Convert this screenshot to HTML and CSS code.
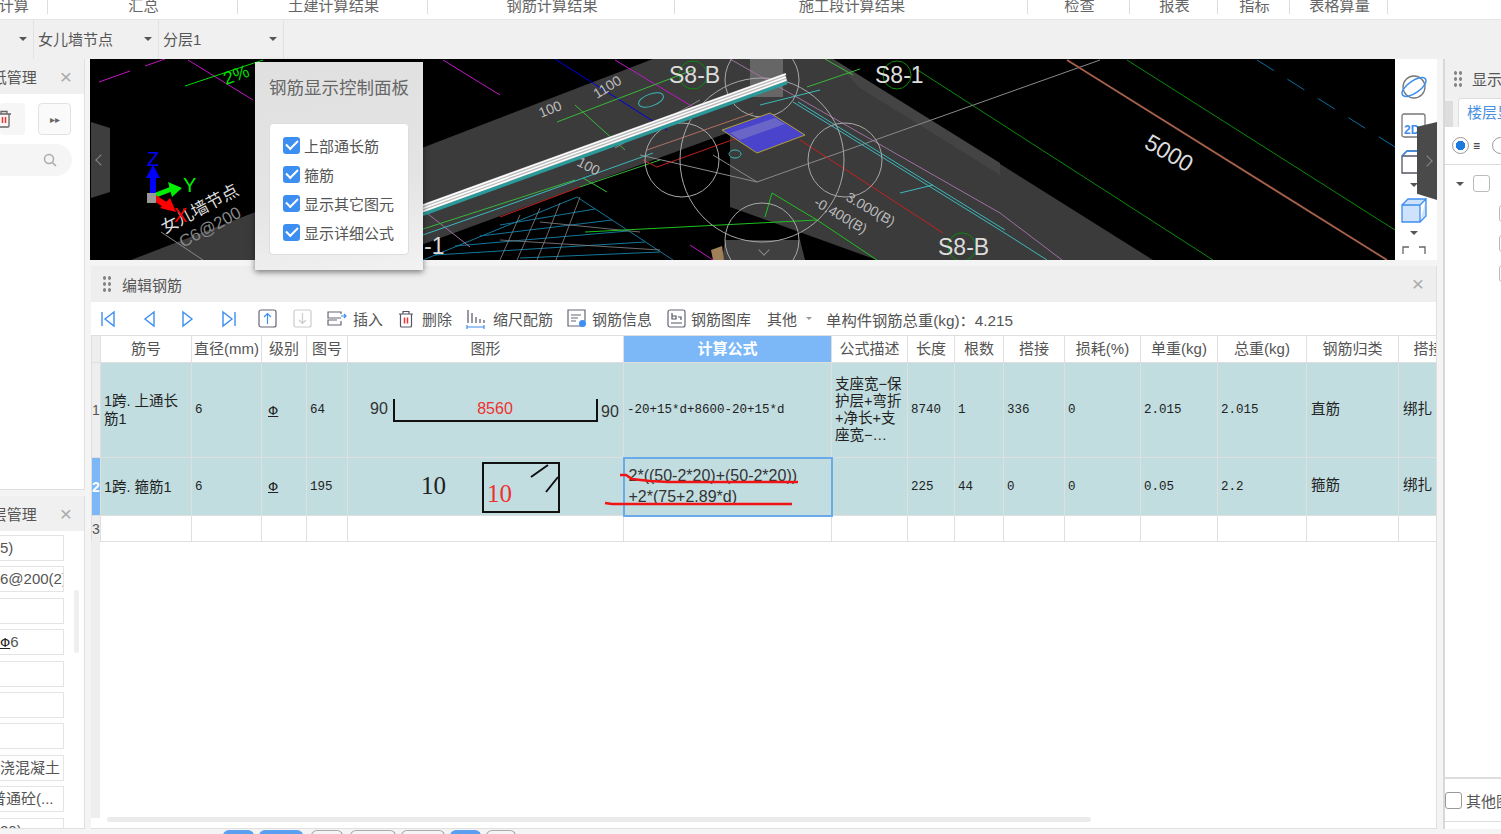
FILE: index.html
```html
<!DOCTYPE html>
<html lang="zh-CN">
<head>
<meta charset="utf-8">
<title>编辑钢筋</title>
<link rel="stylesheet" href="styles.css">
</head>
<body>
<div class="tabs">
	<div class="tab t1">计算</div>
	<div class="tab t2">汇总</div>
	<div class="tab t3">土建计算结果</div>
	<div class="tab t4">钢筋计算结果</div>
	<div class="tab t5">施工段计算结果</div>
	<div class="tab t6">检查</div>
	<div class="tab t7">报表</div>
	<div class="tab t8">指标</div>
	<div class="tab t9">表格算量</div>
</div>
<div class="bar">
	<div class="drop d1"><i class="caret"></i></div>
	<div class="drop d2"><span>女儿墙节点</span><i class="caret"></i></div>
	<div class="drop d3"><span>分层1</span><i class="caret"></i></div>
</div>

<div class="main">
	<div class="left">
		<div class="side upper">
			<div class="side-head"><span>纸管理</span><b class="close">×</b></div>
			<div class="side-btns">
				<div class="sq del">
					<svg width="16" height="18" viewBox="0 0 16 18"><path d="M1 4h13M4 4V1.500h6V4M2 4v12a1 1 0 0 0 1 1h8a1 1 0 0 0 1-1V4" fill="none" stroke="#666" stroke-width="1.300"/><path d="M5.500 7v6M8.500 7v6" stroke="#e33" stroke-width="1.500"/></svg>
				</div>
				<div class="sq more">▸▸</div>
			</div>
			<div class="search">
				<svg width="14" height="14" viewBox="0 0 14 14"><circle cx="6" cy="6" r="4.500" fill="none" stroke="#aaa" stroke-width="1.500"/><path d="M9.500 9.500L13 13" stroke="#aaa" stroke-width="1.500"/></svg>
			</div>
		</div>
		<div class="side lower">
			<div class="side-head"><span>层管理</span><b class="close">×</b></div>
			<div class="inputs">
				<div class="inp">5)</div>
				<div class="inp">6@200(2)</div>
				<div class="inp"></div>
				<div class="inp"><span class="lv-mark">Φ</span>6</div>
				<div class="inp"></div>
				<div class="inp"></div>
				<div class="inp"></div>
				<div class="inp">浇混凝土</div>
				<div class="inp cut">普通砼(...</div>
				<div class="inp">20)</div>
			</div>
			<div class="side-scroll"></div>
		</div>
	</div>

	<div class="center">
		<div class="view">
			<div class="canvas">
				<svg class="cad" width="1305" height="201" viewBox="90 59 1305 201">
					<rect x="90" y="59" width="1305" height="201" fill="#000"/>
					<!-- 构件 -->
					<polygon points="131,260 653,59 833,59 1153,260 877,260 730,207 730,132 380,260" fill="#3b3b3b"/>
					<polygon points="725,240 800,240 805,260 722,260" fill="#404040"/>
					<polygon points="750,59 783,59 783,97 750,97" fill="#666"/>
					<polygon points="833,59 1000,163 1000,175 860,88" fill="#444"/>
					<polygon points="711,250 722,246 724,260 713,260" fill="#a08058"/>
					<!-- 网格 -->
					<g stroke="#13779b" stroke-width="1" fill="none">
						<path d="M423,260L577,197L673,260"/>
						<path d="M500,225L595,209M480,236L612,220M455,246L628,231M435,255L645,242M520,258L660,252"/>
					</g>
					<g stroke="#888" stroke-width=".8" fill="none">
						<path d="M520,215L500,260M540,208L517,260M560,203L537,260M580,197L556,260M540,222L640,232M500,240L660,250"/>
					</g>
					<!-- 轴线 -->
					<g fill="none" stroke-width="1">
						<path d="M99,82L130,71M145,66L165,59M188,60L253,100M443,60L500,95M615,60L703,113M690,245L713,260" stroke="#c414c4"/>
						<path d="M730,59L1000,213M423,210L470,247M1000,213L1062,260" stroke="#a070a0"/>
						<path d="M185,86L263,60" stroke="#0d0"/>
						<path d="M555,59L667,130" stroke="#0000e0"/>
						<path d="M557,122L693,70M575,105L625,150M825,59L853,75M807,87L860,69M580,187L660,160M583,178L607,192M420,230L575,180" stroke="#38b838"/>
						<path d="M585,232L817,220M765,217L772,193L817,220M817,220L877,260" stroke="#1fc01f"/>
						<path d="M913,67L1000,123M1127,60L1395,230M1000,123L1213,260" stroke="#0a8a0a"/>
						<path d="M1257,60L1395,147" stroke="#0a6f9f" stroke-dasharray="20 16"/>
						<path d="M757,182L1100,60M713,155L757,182L640,155M615,148L700,100" stroke="#8a8a8a"/>
						<path d="M1067,60L1387,260" stroke="#a8604c" stroke-width="1.800"/>
						<path d="M793,102L1000,230L1047,260M500,208L653,153M420,236L500,208M760,105L820,90M900,193L933,185" stroke="#3bb8bc"/>
						<path d="M798,102L1005,230" stroke="#3bb8bc"/>
						<path d="M500,217L580,187M657,167L740,137M800,140L943,233M643,160L657,167" stroke="#c42020"/>
						<path d="M647,150L753,113" stroke="#b07060"/>
					</g>
					<g fill="none" stroke="#a8a8a8" stroke-width="1">
						<circle cx="682" cy="160" r="37"/>
						<circle cx="845" cy="160" r="37"/>
						<circle cx="762" cy="240" r="37"/>
						<circle cx="762" cy="80" r="37"/>
						<circle cx="762" cy="160" r="82"/>
					</g>
					<ellipse cx="651" cy="100" rx="13" ry="6" fill="none" stroke="#3bb8bc" transform="rotate(-20 651 100)"/>
					<ellipse cx="735" cy="154" rx="6" ry="4" fill="none" stroke="#3bb8bc"/>
					<polygon points="722,130 770,113 805,135 757,153" fill="#4a44cc" stroke="#b0a030"/>
					<polygon points="730,133 775,118 785,124 740,140" fill="#6a66c8"/>
					<!-- 钢筋 -->
					<g fill="none">
						<path d="M410,216L786,80" stroke="#2a9a9a" stroke-width="9"/>
						<path d="M410,213L786,77" stroke="#bbb" stroke-width="8"/>
						<path d="M410,210L786,74M410,213L786,77M410,216L786,80" stroke="#fff" stroke-width="1.500"/>
					</g>
					<!-- 文字 -->
					<g fill="none" stroke="#0a8a0a">
						<circle cx="693" cy="75" r="14"/>
						<circle cx="897" cy="75" r="14"/>
						<circle cx="962" cy="247" r="14"/>
					</g>
					<g class="cad-t">
						<text x="669" y="83">S8-B</text>
						<text x="875" y="83">S8-1</text>
						<text x="938" y="255">S8-B</text>
						<text x="424" y="254">-1</text>
						<text x="0" y="0" transform="translate(1143,147) rotate(30)">5000</text>
					</g>
					<g class="cad-s">
						<text transform="translate(541,118) rotate(-22)">100</text>
						<text transform="translate(597,99) rotate(-32)">1100</text>
						<text transform="translate(576,165) rotate(28)">100</text>
						<text transform="translate(845,200) rotate(30)">3.000(B)</text>
						<text transform="translate(813,205) rotate(30)">-0.400(B)</text>
					</g>
					<text class="cad-g" transform="translate(226,85) rotate(-20)">2%</text>
					<g class="cad-n">
						<text transform="translate(165,234) rotate(-28)">女儿墙节点</text>
						<text class="dim" transform="translate(183,248) rotate(-28)">C6@200</text>
					</g>
					<path d="M161,232L203,260" fill="none" stroke="#888"/>
					<!-- 坐标 -->
					<path d="M153,195V170" stroke="#00f" stroke-width="6"/>
					<polygon points="153,165 146,178 160,178" fill="#00f"/>
					<path d="M156,195L174,188" stroke="#0e0" stroke-width="5"/>
					<polygon points="182,188 168,182 172,197" fill="#0e0"/>
					<path d="M155,198L170,208" stroke="#f00" stroke-width="6"/>
					<polygon points="176,212 160,208 170,198" fill="#f00"/>
					<rect x="147" y="193" width="9" height="10" fill="#999"/>
					<text class="ax blue" x="147" y="166">Z</text>
					<text class="ax lime" x="183" y="192">Y</text>
					<text class="ax red" x="174" y="222">X</text>
				</svg>
				<div class="handle h-left"><i class="chev lft"></i></div>
				<i class="chev dwn"></i>
			</div>
			<div class="strip">
				<svg width="30" height="30" viewBox="0 0 30 30"><ellipse cx="15" cy="14" rx="11" ry="11" fill="none" stroke="#777" stroke-width="1.300"/><ellipse cx="15" cy="14" rx="14" ry="6" fill="none" stroke="#3c8ef0" stroke-width="1.500" transform="rotate(-35 15 14)"/></svg>
				<svg width="26" height="26" viewBox="0 0 26 26"><rect x="1" y="1" width="23" height="23" rx="2" fill="#fff" stroke="#777" stroke-width="1.300"/><text class="twod" x="3" y="21">2D</text></svg>
				<svg width="26" height="26" viewBox="0 0 26 26"><path d="M1 7h17v17H1zM1 7l5-5h17l-5 5" fill="#fff" stroke="#556" stroke-width="1.300"/><path d="M1 7l5-5h17" fill="none" stroke="#3c8ef0" stroke-width="1.300"/></svg>
				<i class="caret"></i>
				<svg width="26" height="26" viewBox="0 0 26 26"><path d="M1 8h18v17H1zM1 8l6-6h18l-6 6M25 2v17l-6 6" fill="#cfe2fb" stroke="#3c8ef0" stroke-width="1.300"/></svg>
				<i class="caret"></i>
				<svg width="26" height="10" viewBox="0 0 26 10"><path d="M2 9V2h6M18 2h6v7" fill="none" stroke="#666" stroke-width="1.300"/></svg>
			</div>
			<div class="handle h-right"><i class="chev rgt"></i></div>

			<div class="panel">
				<div class="panel-t">钢筋显示控制面板</div>
				<div class="checks">
					<label class="chk"><i class="box"></i>上部通长筋</label>
					<label class="chk"><i class="box"></i>箍筋</label>
					<label class="chk"><i class="box"></i>显示其它图元</label>
					<label class="chk"><i class="box"></i>显示详细公式</label>
				</div>
			</div>
		</div>

		<div class="edit">
			<div class="edit-head">
				<i class="grip"></i>
				<span>编辑钢筋</span>
				<b class="close">×</b>
			</div>
			<div class="tools">
				<svg class="nav" width="16" height="18" viewBox="0 0 16 18"><path d="M2 2v14M14 2L5 9l9 7z" fill="none" stroke="#3c8ef0" stroke-width="1.400"/></svg>
				<svg class="nav" width="12" height="18" viewBox="0 0 12 18"><path d="M11 2L2 9l9 7z" fill="none" stroke="#3c8ef0" stroke-width="1.400"/></svg>
				<svg class="nav" width="12" height="18" viewBox="0 0 12 18"><path d="M1 2l9 7-9 7z" fill="none" stroke="#3c8ef0" stroke-width="1.400"/></svg>
				<svg class="nav" width="16" height="18" viewBox="0 0 16 18"><path d="M14 2v14M2 2l9 7-9 7z" fill="none" stroke="#3c8ef0" stroke-width="1.400"/></svg>
				<svg class="ud" width="19" height="19" viewBox="0 0 19 19"><rect x="1" y="1" width="17" height="17" rx="2" fill="none" stroke="#667" stroke-width="1.200"/><path d="M9.500 15V5M6 8l3.500-3.500L13 8" fill="none" stroke="#3c8ef0" stroke-width="1.200"/></svg>
				<svg class="ud" width="19" height="19" viewBox="0 0 19 19"><rect x="1" y="1" width="17" height="17" rx="2" fill="none" stroke="#ccc" stroke-width="1.200"/><path d="M9.500 4v10M6 11l3.500 3.500L13 11" fill="none" stroke="#ccc" stroke-width="1.200"/></svg>
				<div class="tool ins">
					<svg width="20" height="16" viewBox="0 0 20 16"><path d="M14 3V1H1v6h13M14 10v4H1v-5h9" fill="none" stroke="#667" stroke-width="1.200"/><path d="M14 5h5M17 3l2 2-2 2" fill="none" stroke="#3c8ef0" stroke-width="1.200"/></svg>
					<span>插入</span>
				</div>
				<div class="tool rem">
					<svg width="16" height="18" viewBox="0 0 16 18"><path d="M1 4h14M5 4V1.500h6V4M2.500 4v12a1 1 0 0 0 1 1h9a1 1 0 0 0 1-1V4" fill="none" stroke="#556" stroke-width="1.200"/><path d="M6.500 7.500v6M9.500 7.500v6" stroke="#e33" stroke-width="1.500"/></svg>
					<span>删除</span>
				</div>
				<div class="tool scale">
					<svg width="19" height="20" viewBox="0 0 19 20"><path d="M2 1v13M6 4v10M10 8v6M14 10v4M18 11v3" stroke="#556" stroke-width="1.200" fill="none"/><path d="M1 18h17M1 16v4M18 16v4" stroke="#3c8ef0" stroke-width="1.200" fill="none"/></svg>
					<span>缩尺配筋</span>
				</div>
				<div class="tool info">
					<svg width="20" height="19" viewBox="0 0 20 19"><path d="M15 17H1V1h17v11" fill="none" stroke="#667" stroke-width="1.200"/><path d="M4 6h10M4 9h7M4 12h5" stroke="#667" stroke-width="1.200"/><circle cx="15.500" cy="14.500" r="3.500" fill="#3c8ef0"/></svg>
					<span>钢筋信息</span>
				</div>
				<div class="tool lib">
					<svg width="19" height="19" viewBox="0 0 19 19"><rect x="1" y="1" width="17" height="17" rx="2" fill="none" stroke="#667" stroke-width="1.200"/><path d="M5 4v6h4V7H5M11 8h3v3M4 14h11" fill="none" stroke="#556" stroke-width="1.200"/></svg>
					<span>钢筋图库</span>
				</div>
				<div class="tool oth"><span>其他</span><i class="caret small"></i></div>
				<div class="weight">单构件钢筋总重(kg)：4.215</div>
			</div>
			<div class="grid-wrap">
				<table class="grid">
					<colgroup>
						<col class="c0"><col class="c1"><col class="c2"><col class="c3"><col class="c4"><col class="c5"><col class="c6"><col class="c7">
						<col class="c8"><col class="c9"><col class="c10"><col class="c11"><col class="c12"><col class="c13"><col class="c14"><col class="c15">
					</colgroup>
					<thead>
						<tr>
							<th></th><th>筋号</th><th class="tight">直径(mm)</th><th>级别</th><th>图号</th><th>图形</th><th class="on">计算公式</th><th>公式描述</th>
							<th>长度</th><th>根数</th><th>搭接</th><th>损耗(%)</th><th>单重(kg)</th><th>总重(kg)</th><th>钢筋归类</th><th>搭接</th>
						</tr>
					</thead>
					<tbody>
						<tr class="r1">
							<td class="num">1</td>
							<td class="name">1跨. 上通长<br>筋1</td>
							<td class="m">6</td>
							<td class="lv"><span class="lv-mark">Φ</span></td>
							<td class="m">64</td>
							<td class="shape">
								<svg width="276" height="94" viewBox="0 0 276 94">
									<text class="dim-t" x="22" y="51">90</text>
									<path d="M46 36v22h203V36" fill="none" stroke="#111" stroke-width="2"/>
									<text class="dim-r" x="147" y="51" text-anchor="middle">8560</text>
									<text class="dim-t" x="253" y="54">90</text>
								</svg>
							</td>
							<td class="m fx">-20+15*d+8600-20+15*d</td>
							<td class="desc">支座宽−保<br>护层+弯折<br>+净长+支<br>座宽−…</td>
							<td class="m">8740</td>
							<td class="m">1</td>
							<td class="m">336</td>
							<td class="m">0</td>
							<td class="m">2.015</td>
							<td class="m">2.015</td>
							<td class="cn">直筋</td>
							<td class="cn">绑扎</td>
						</tr>
						<tr class="r2">
							<td class="num cur">2</td>
							<td class="name">1跨. 箍筋1</td>
							<td class="m">6</td>
							<td class="lv"><span class="lv-mark">Φ</span></td>
							<td class="m">195</td>
							<td class="shape">
								<svg width="276" height="57" viewBox="0 0 276 57">
									<text class="s10" x="73" y="36">10</text>
									<rect x="135" y="5" width="76" height="49" fill="none" stroke="#111" stroke-width="2"/>
									<text class="s10 red" x="139" y="44">10</text>
									<path d="M183 19l17-12M198 34l12-15" stroke="#111" stroke-width="2" fill="none"/>
								</svg>
							</td>
							<td class="sel">
								<div class="sel-fx">2*((50-2*20)+(50-2*20))<br>+2*(75+2.89*d)</div>
								<svg class="marks" width="200" height="44" viewBox="0 0 200 44">
									<path d="M16 7h6l6 4 18 2 18 1H194" fill="none" stroke="#f01414" stroke-width="2.600"/>
									<path d="M1 35l7 1H188" fill="none" stroke="#f01414" stroke-width="2.600"/>
								</svg>
							</td>
							<td></td>
							<td class="m">225</td>
							<td class="m">44</td>
							<td class="m">0</td>
							<td class="m">0</td>
							<td class="m">0.05</td>
							<td class="m">2.2</td>
							<td class="cn">箍筋</td>
							<td class="cn">绑扎</td>
						</tr>
						<tr class="r3">
							<td class="num">3</td>
							<td></td><td></td><td></td><td></td><td></td><td></td><td></td><td></td><td></td><td></td><td></td><td></td><td></td><td></td><td></td>
						</tr>
					</tbody>
				</table>
				<div class="gutter"></div>
			</div>
			<div class="hscroll"></div>
		</div>
	</div>

	<div class="right">
		<div class="side-head rh"><i class="grip"></i><span>显示</span></div>
		<div class="r-tabs"><div class="r-mini"></div><div class="r-tab">楼层显示</div></div>
		<div class="r-radio"><i class="radio on"></i><span class="ico3">≡</span><i class="radio"></i></div>
		<div class="r-tree">
			<div class="r-node"><i class="caret"></i><i class="cb"></i></div>
			<i class="cb sub"></i>
			<i class="cb sub"></i>
			<i class="cb sub"></i>
		</div>
		<div class="r-foot"><i class="cb big"></i><span>其他图元</span></div>
	</div>
</div>

<div class="foot">
	<i class="pill blue w31"></i>
	<i class="pill blue w44"></i>
	<i class="pill w32"></i>
	<i class="pill w46"></i>
	<i class="pill w44"></i>
	<i class="pill blue w31"></i>
	<i class="pill w30"></i>
</div>
</body>
</html>
```

FILE: styles.css
```css
*{margin:0;padding:0;box-sizing:border-box;}
html,body{width:1501px;height:834px;overflow:hidden;}
body{background:#f4f4f4;font-family:"Liberation Sans","Noto Sans CJK SC",sans-serif;font-size:15px;color:#555;}
i{font-style:normal;display:block;}

/* top tabs, cut off by the window */
.tabs{display:flex;height:20px;background:#fff;border-bottom:1px solid #e4e4e4;overflow:hidden;}
.tab{height:14px;line-height:12px;padding-left:2px;font-size:15.200px;text-align:center;border-right:1px solid #ddd;color:#666;white-space:nowrap;}
.t1{width:48px;text-align:right;padding-right:18px;direction:rtl;}
.t2{width:190px;}
.t3{width:190px;}
.t4{width:247px;}
.t5{width:353px;}
.t6{width:102px;}
.t7{width:88px;}
.t8{width:72px;}
.t9{width:98px;}

.bar{display:flex;height:39px;background:#f0f0f0;}
.drop{display:flex;align-items:center;justify-content:space-between;height:39px;padding:0 6px 2px 4px;border-right:1px solid #e2e2e2;color:#555;}
.d1{width:34px;justify-content:flex-end;padding-right:6px;}
.d2{width:125px;}
.d3{width:125px;}
.caret{width:0;height:0;border-left:4px solid transparent;border-right:4px solid transparent;border-top:4px solid #555;}
.caret.small{border-top-color:#999;border-left-width:3px;border-right-width:3px;border-top-width:3px;}

.main{display:flex;height:770px;}

/* left */
.left{width:85px;margin-right:5px;display:flex;flex-direction:column;gap:6px;}
.side{background:#fff;border-right:1px solid #e0e0e0;border-bottom:1px solid #e0e0e0;position:relative;overflow:hidden;}
.upper{height:431px;}
.lower{height:333px;}
.side-head{height:35px;background:#f0f0f0;display:flex;align-items:center;justify-content:flex-end;gap:23px;padding-right:12px;color:#555;white-space:nowrap;}
.close{font-weight:400;font-size:21px;color:#aaa;line-height:20px;}
.side-btns{display:flex;justify-content:space-between;padding:9px 13px 0 0;}
.sq{height:32px;border-radius:4px;display:flex;align-items:center;justify-content:center;}
.del{width:25px;background:#f6f6f6;justify-content:flex-start;}
.del svg{margin-left:-3px;}
.more{width:33px;border:1px solid #e2e2e2;color:#666;font-size:10px;background:#fafafa;}
.search{margin-top:9px;width:72px;height:32px;background:#f5f5f5;border-radius:0 16px 16px 0;display:flex;align-items:center;justify-content:flex-end;padding-right:15px;}
.inputs{display:flex;flex-direction:column;gap:5.4px;padding-top:4px;}
.inp{width:64px;height:26px;flex:none;background:#fff;border:1px solid #e4e4e4;border-left:0;line-height:24px;white-space:nowrap;overflow:hidden;color:#555;font-size:15px;}
.inp.cut{text-indent:-9px;}
.side-scroll{position:absolute;left:74px;top:94px;width:5px;height:63px;background:#efefef;border-radius:3px;}
.lv-mark{font-family:"DejaVu Sans",sans-serif;font-size:13px;text-decoration:underline;color:#222;}

/* viewer */
.center{width:1347px;margin-right:6px;}
.view{position:relative;z-index:2;display:flex;height:201px;}
.canvas{position:relative;width:1305px;height:201px;overflow:hidden;}
.cad{display:block;}
.cad-t text{fill:#ddd;font-size:23px;}
.cad-s text{fill:#bbb;font-size:14px;}
.cad-g{fill:#0d0;font-size:18px;}
.cad-n text{fill:#ddd;font-size:17px;}
.cad-n .dim{fill:#888;font-size:17px;}
.ax{font-size:20px;}
.blue{fill:#00f;}
.lime{fill:#0e0;}
.ax.red{fill:#f00;}
.handle{position:absolute;background:#3e3e3e;display:flex;align-items:center;justify-content:center;}
.h-left{left:1px;top:63px;width:19px;height:76px;clip-path:polygon(0 0,100% 8%,100% 92%,0 100%);}
.h-right{left:1327px;top:63px;width:20px;height:78px;background:#4a4a4a;clip-path:polygon(0 6%,100% 0,100% 100%,0 92%);}
.chev{width:8px;height:8px;border-left:1.500px solid #888;border-bottom:1.500px solid #888;}
.lft{transform:rotate(45deg);}
.rgt{transform:rotate(225deg);}
.dwn{position:absolute;left:670px;top:187px;transform:rotate(-45deg);}
.strip{width:42px;height:201px;background:#fff;display:flex;flex-direction:column;align-items:center;gap:10px;padding:14px 4px 0 0;overflow:hidden;}
.strip svg,.strip .caret{flex:none;}
.strip .caret{margin-top:-2px;}
.twod{font-size:12px;font-weight:700;fill:#3c8ef0;}

/* float panel */
.panel{position:absolute;left:165px;top:3px;width:168px;height:208px;padding:14px 14px 0;background:linear-gradient(170deg,#e0e0e0,#e4e4e4 60%,#f2f2f2);box-shadow:0 2px 6px rgba(0,0,0,.5);}
.panel-t{font-size:17.500px;line-height:24px;color:#666;white-space:nowrap;}
.checks{margin-top:23px;height:132px;padding:7px 13px 0;background:#fff;border:1px solid #ddd;border-radius:4px;}
.chk{display:flex;align-items:center;gap:4px;height:29px;color:#555;white-space:nowrap;}
.box{width:17px;height:17px;border-radius:3px;background:#3c8ef0;position:relative;}
.box:after{content:"";position:absolute;left:3px;top:3px;width:10px;height:5px;border-left:2px solid #fff;border-bottom:2px solid #fff;transform:rotate(-45deg);}

/* edit panel */
.edit{position:relative;margin:6px 0 0 1px;height:563px;width:1346px;background:#fff;border-right:1px solid #e0e0e0;border-bottom:1px solid #e0e0e0;}
.edit-head{height:36px;background:#eeeeee;display:flex;align-items:center;padding:0 12px 0 11px;gap:10px;color:#555;}
.edit-head .close{margin-left:auto;}
.grip{width:10px;height:18px;background:radial-gradient(circle,#888 1.500px,transparent 2px) 0 0/5px 6px;flex:none;}
.tools{height:33px;display:flex;align-items:center;color:#555;white-space:nowrap;}
.nav{flex:none;}
.nav:nth-child(1){margin-left:9px;}
.nav:nth-child(2){margin-left:27px;}
.nav:nth-child(3){margin-left:27px;}
.nav:nth-child(4){margin-left:27px;}
.ud:nth-child(5){margin-left:21px;}
.ud:nth-child(6){margin-left:16px;}
.tool{display:flex;align-items:center;gap:6px;}
.ins{margin-left:15px;}
.rem{margin-left:15px;gap:8px;}
.scale{margin-left:14px;gap:8px;}
.info{margin-left:14px;gap:5px;}
.lib{margin-left:15px;gap:5px;}
.oth{margin-left:16px;gap:9px;}
.weight{margin-left:14px;font-size:15.300px;}

.grid-wrap{position:relative;width:1345px;height:483px;overflow:hidden;}
.grid{table-layout:fixed;width:1367px;border-collapse:collapse;color:#222;}
.c0{width:9px;}.c1{width:91px;}.c2{width:70px;}.c3{width:45px;}.c4{width:41px;}.c5{width:276px;}.c6{width:208px;}.c7{width:76px;}
.c8{width:47px;}.c9{width:49px;}.c10{width:61px;}.c11{width:76px;}.c12{width:77px;}.c13{width:89px;}.c14{width:92px;}.c15{width:60px;}
.grid th,.grid td{border:1px solid #dfdfdf;white-space:nowrap;overflow:hidden;line-height:16px;}
.grid th{height:27px;font-weight:400;color:#555;background:#fff;font-size:15px;}
.grid th:first-child,.num{background:#eeeeee;color:#555;text-align:center;}
.grid th.tight{padding:0;}
.grid th.on{background:#7cb8f8;color:#fff;font-weight:700;}
.r1{height:95px;}
.r2{height:58px;}
.r3{height:26px;}
.r1 td,.r2 td{background:#c1dde0;}
.grid .r1 td.num{background:#eeeeee;}
.grid .r2 td.cur{background:#7cb8f8;color:#fff;font-weight:700;}
.num{font-size:14px;padding:0;}
.grid .name{white-space:normal;padding:0 3px;line-height:18px;font-size:14.500px;}
.m{font-family:"Liberation Mono","Noto Sans CJK SC",monospace;font-size:12.500px;padding-left:3px;}
.grid .lv{text-align:left;padding-left:6px;}
.fx{padding-left:3px;}
.grid .shape{padding:0;}
.shape svg{display:block;}
.dim-t{font-size:16px;fill:#333;}
.dim-r{font-size:16px;fill:#f03030;}
.s10{font-family:"Liberation Serif",serif;font-size:25px;fill:#222;}
.s10.red{fill:#f03030;}
.grid .desc{white-space:normal;padding:0 3px;line-height:17px;font-size:14.500px;}
.cn{padding:0 0 3px 4px;font-size:14.500px;}
.grid td.sel{position:relative;overflow:visible;padding:0 0 2px;border:2px solid #6aa9ea;}
.sel-fx{padding-left:4px;font-size:16px;line-height:21px;color:#333;}
.marks{position:absolute;left:-21px;top:9px;}
.gutter{position:absolute;left:0;top:206px;width:9px;height:277px;background:#eeeeee;}
.hscroll{position:absolute;left:16px;top:551px;width:984px;height:5px;background:#ebebeb;border-radius:3px;}

/* right */
.right{flex:1;min-width:0;background:#fff;border-left:2px solid #d5d9dc;overflow:hidden;display:flex;flex-direction:column;white-space:nowrap;}
.rh{justify-content:flex-start;height:39px;padding:0 0 0 8px;gap:9px;}
.r-tabs{display:flex;height:29px;background:#f2f2f2;align-items:flex-end;gap:5px;}
.r-mini{width:8px;height:26px;background:#ddd;flex:none;}
.r-tab{height:29px;padding:0 8px;line-height:28px;background:#fff;border:1px solid #ddd;border-bottom:0;border-radius:4px 0 0 0;color:#4a90e2;flex:none;}
.r-radio{height:38px;display:flex;align-items:center;padding-left:7px;border-bottom:1px solid #ddd;}
.radio{width:17px;height:17px;border:1.500px solid #999;border-radius:50%;flex:none;margin-left:10px;}
.radio.on{margin-left:0;background:radial-gradient(circle,#1e7be0 4.500px,#fff 5px);}
.ico3{margin-left:4px;color:#222;font-weight:700;font-size:12px;width:9px;flex:none;}
.r-tree{flex:1;position:relative;padding:10px 0 0 11px;}
.r-node{display:flex;align-items:center;gap:9px;}
.cb{width:17px;height:17px;border:1.500px solid #bbb;border-radius:3px;background:#fff;flex:none;}
.cb.sub{margin:13px 0 0 43px;height:17px;}
.r-foot{height:45px;border-top:2px solid #ddd;display:flex;align-items:center;gap:4px;padding-left:0;border-bottom:1px solid #ddd;color:#555;margin-bottom:7px;flex:none;}
.cb.big{border-color:#999;}

/* bottom strip */
.foot{display:flex;gap:5px;padding:1px 0 0 223px;}
.pill{height:6px;border:1px solid #aaa;border-radius:6px 6px 0 0;background:#f4f4f4;}
.pill.blue{background:#5b9ff0;border-color:#5b9ff0;}
.w31{width:31px;}.w44{width:44px;}.w32{width:32px;margin-left:3px;}.w46{width:46px;margin-left:2px;}.w30{width:30px;}
```
